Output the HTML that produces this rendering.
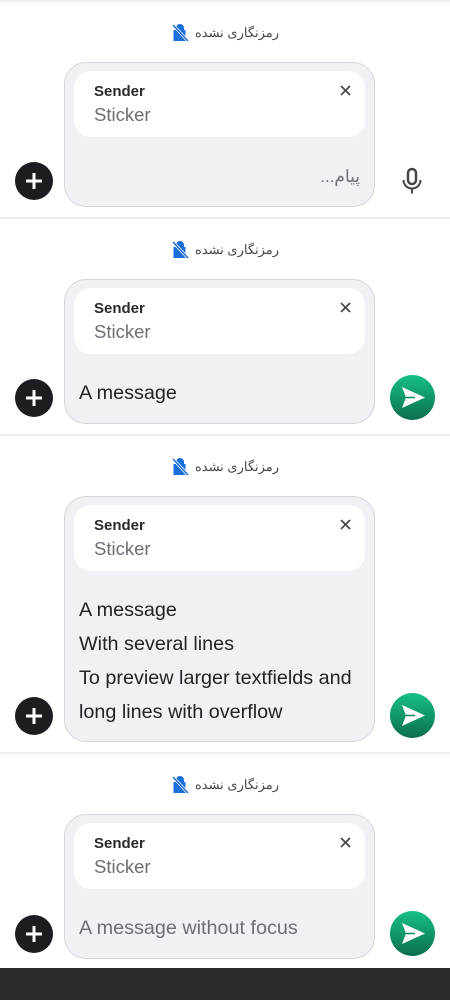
<!DOCTYPE html>
<html><head><meta charset="utf-8"><style>
*{margin:0;padding:0;box-sizing:border-box}
body{width:450px;height:1000px;background:#fff;position:relative;overflow:hidden;font-family:"Liberation Sans",Roboto,sans-serif}
.hr{position:absolute;left:0;width:450px;height:2px;background:#eceef1}
.lock{position:absolute;left:0;width:450px;text-align:center;font-family:"Liberation Sans","Noto Sans CJK SC",sans-serif;font-size:13px;color:#44474c;display:flex;justify-content:center;align-items:center;gap:6px;direction:ltr}
.box{position:absolute;left:64px;width:311px;background:#f0f1f5;border:1px solid #d3d6da;border-radius:22px}
.card{position:absolute;left:9px;top:8px;width:291px;height:66px;background:#fff;border-radius:17px}
.snd{position:absolute;left:20px;top:12px;font-size:15px;font-weight:bold;color:#2a2b2e}
.stk{position:absolute;left:20px;top:33px;font-size:18.5px;color:#6c6f75}
.x{position:absolute;right:14px;top:14px}
.txt{position:absolute;left:14px;font-size:19.8px;color:#222327;line-height:34px}
.plus{position:absolute;left:15px;width:38px;height:38px;border-radius:50%;background:#1c1d21}
.send{position:absolute;left:390px;width:45px;height:45px;border-radius:50%;background:linear-gradient(#16c085,#0b6e50)}
</style></head><body>
<svg width="0" height="0" style="position:absolute"><defs>
<g id="lk"><path d="M5 7V5a4 4 0 0 1 8 0v2h1.5v11h-12V7z" fill="#1a6fdd"/><path d="M2 2l15 16" stroke="#fff" stroke-width="3"/><path d="M2 2l15 16" stroke="#1a6fdd" stroke-width="1.5"/></g>
<g id="xx"><path d="M1 1l9 9M10 1L1 10" stroke="#45474c" stroke-width="1.7"/></g>
<g id="pl"><path d="M19 11v16M11 19h16" stroke="#fff" stroke-width="3"/></g>
<g id="sd"><path d="M12 12l23 10.5L12 33l4-10.5z" fill="#fff"/><path d="M16 22.5h9" stroke="#0f8a60" stroke-width="1.5"/></g>
</defs></svg>

<div class="hr" style="top:0"></div>
<div class="lock" style="top:23px"><svg width="18" height="19"><use href="#lk"/></svg><span>رمزنگاری نشده</span></div>
<div class="box" style="top:62px;height:145px"><div class="card"><div class="snd">Sender</div><div class="stk">Sticker</div><svg class="x" width="11" height="11"><use href="#xx"/></svg></div>
<div dir="rtl" style="position:absolute;right:14px;top:104px;font-size:17px;color:#6c6f75;font-family:'Liberation Sans','Noto Sans CJK SC',sans-serif">پیام...</div></div>
<div class="plus" style="top:162px"><svg width="38" height="38"><use href="#pl"/></svg></div>
<svg style="position:absolute;left:401px;top:167px" width="22" height="28"><rect x="7" y="2" width="8" height="15" rx="4" fill="none" stroke="#45474c" stroke-width="2.5"/><path d="M2.5 13a8.5 8.5 0 0 0 17 0M11 21.5v5" stroke="#45474c" stroke-width="2" fill="none"/></svg>

<div class="hr" style="top:217px"></div>
<div class="lock" style="top:240px"><svg width="18" height="19"><use href="#lk"/></svg><span>رمزنگاری نشده</span></div>
<div class="box" style="top:279px;height:145px"><div class="card"><div class="snd">Sender</div><div class="stk">Sticker</div><svg class="x" width="11" height="11"><use href="#xx"/></svg></div>
<div class="txt" style="top:96px">A message</div></div>
<div class="plus" style="top:379px"><svg width="38" height="38"><use href="#pl"/></svg></div>
<div class="send" style="top:375px"><svg width="45" height="45"><use href="#sd"/></svg></div>

<div class="hr" style="top:434px"></div>
<div class="lock" style="top:457px"><svg width="18" height="19"><use href="#lk"/></svg><span>رمزنگاری نشده</span></div>
<div class="box" style="top:496px;height:246px"><div class="card"><div class="snd">Sender</div><div class="stk">Sticker</div><svg class="x" width="11" height="11"><use href="#xx"/></svg></div>
<div class="txt" style="top:96px">A message<br>With several lines<br>To preview larger textfields and<br>long lines with overflow</div></div>
<div class="plus" style="top:697px"><svg width="38" height="38"><use href="#pl"/></svg></div>
<div class="send" style="top:693px"><svg width="45" height="45"><use href="#sd"/></svg></div>

<div class="hr" style="top:752px"></div>
<div class="lock" style="top:775px"><svg width="18" height="19"><use href="#lk"/></svg><span>رمزنگاری نشده</span></div>
<div class="box" style="top:814px;height:145px"><div class="card"><div class="snd">Sender</div><div class="stk">Sticker</div><svg class="x" width="11" height="11"><use href="#xx"/></svg></div>
<div class="txt" style="top:96px;color:#6c6f75">A message without focus</div></div>
<div class="plus" style="top:915px"><svg width="38" height="38"><use href="#pl"/></svg></div>
<div class="send" style="top:911px"><svg width="45" height="45"><use href="#sd"/></svg></div>

<div style="position:absolute;left:0;top:968px;width:450px;height:32px;background:#2b2b2b"></div>
</body></html>
